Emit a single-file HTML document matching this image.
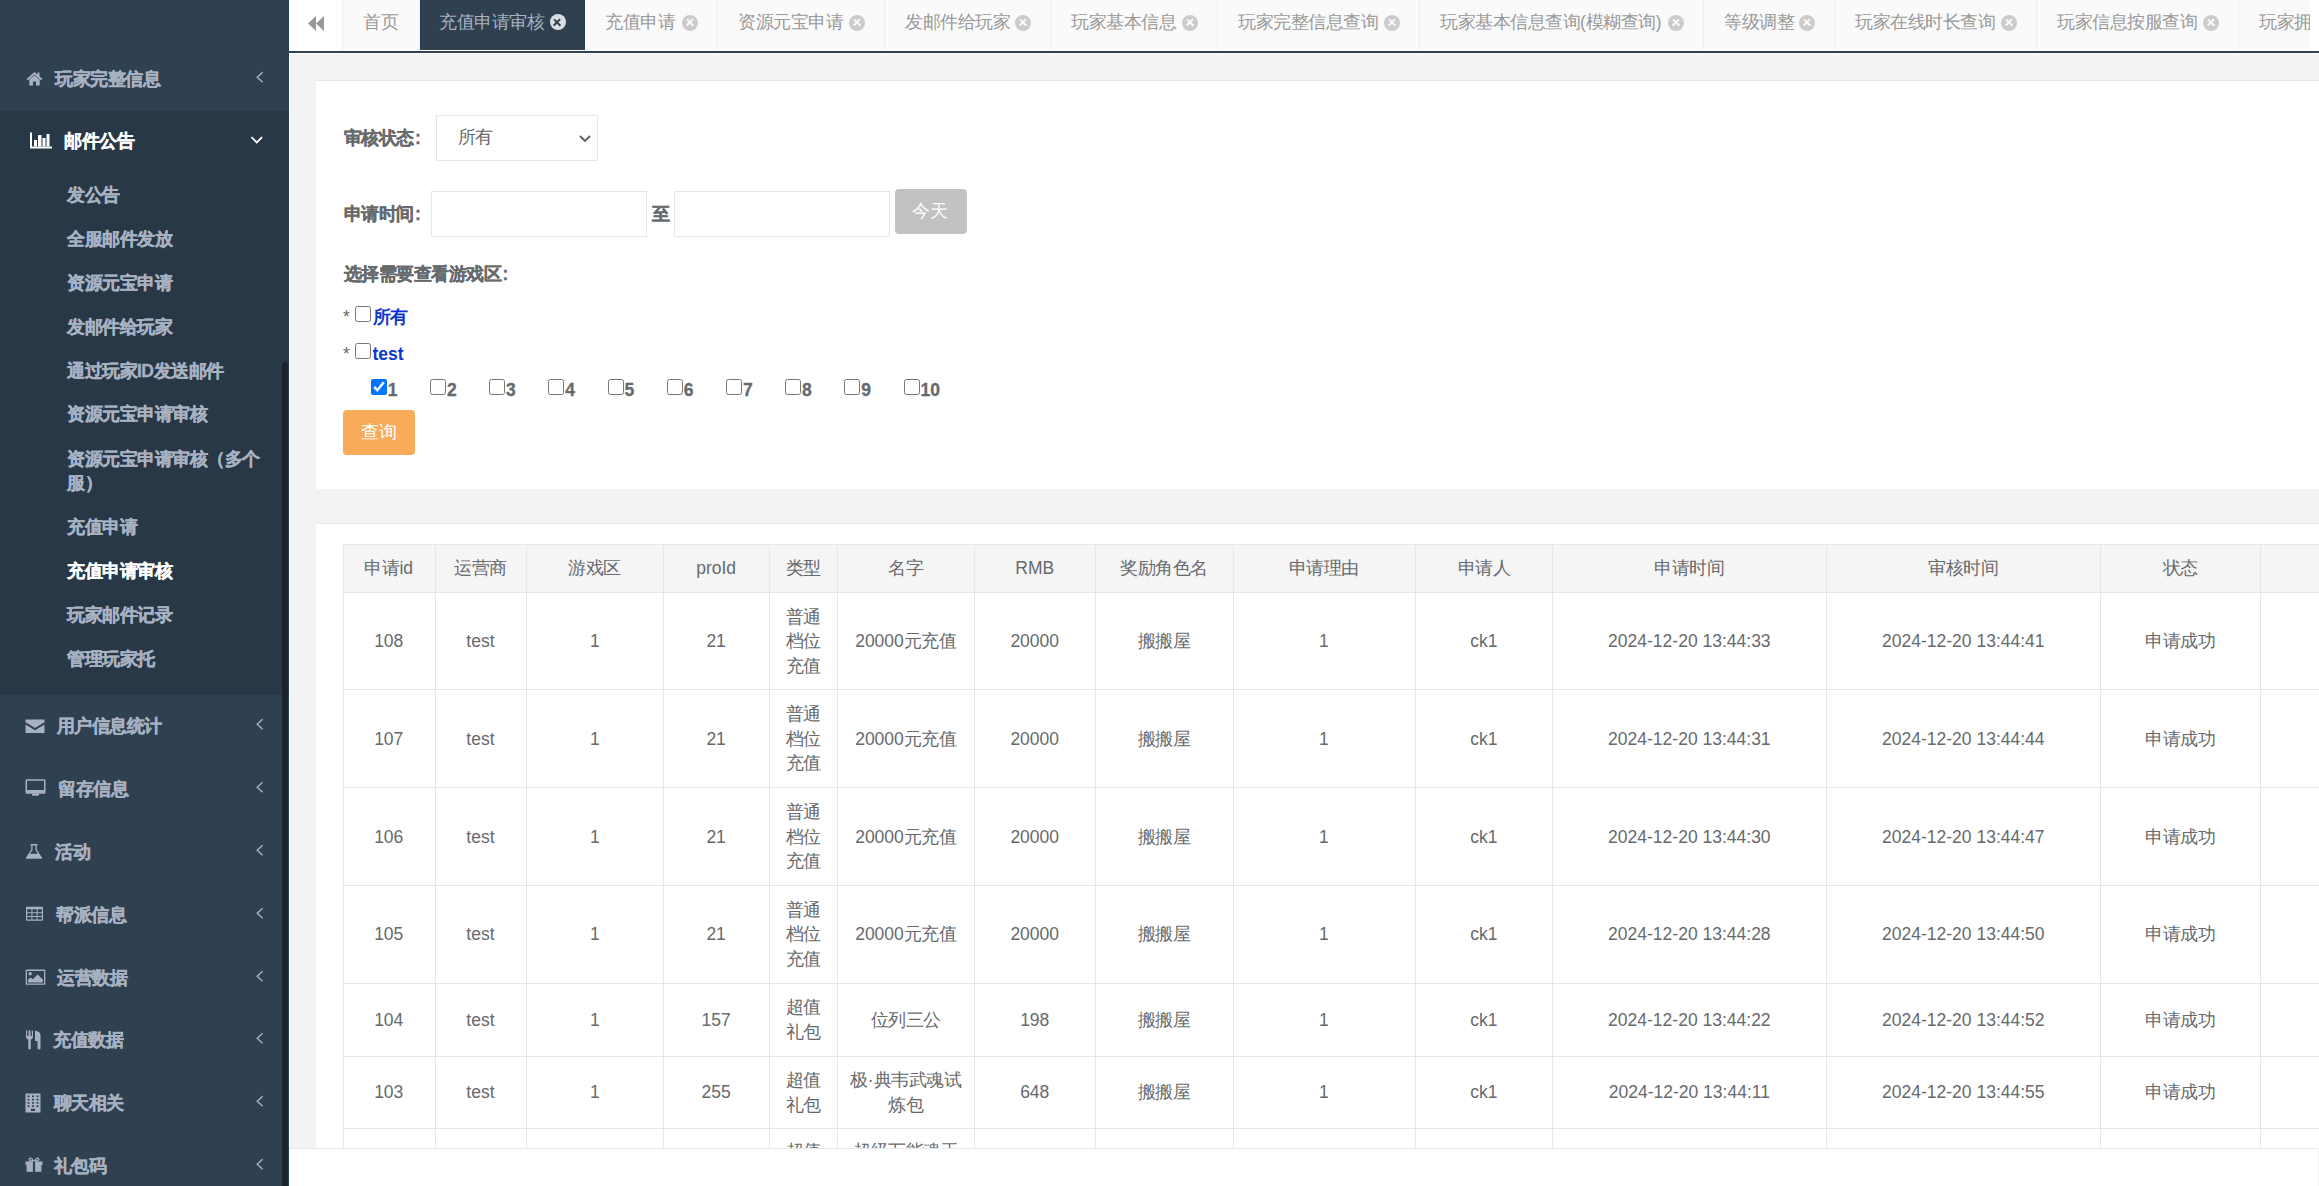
<!DOCTYPE html>
<html><head><meta charset="utf-8">
<style>
*{box-sizing:border-box}
html,body{margin:0;padding:0}
body{width:2319px;height:1186px;overflow:hidden;position:relative;background:#f3f3f4;font-family:"Liberation Sans",sans-serif;font-size:17.5px;color:#676a6c}
.abs{position:absolute}
.c{letter-spacing:-0.5px}
/* sidebar */
#side{position:absolute;left:0;top:0;width:289px;height:1186px;background:#2f4050;overflow:hidden}
#side .sub{position:absolute;left:0;top:111px;width:289px;height:584px;background:#293846}
.nv{position:absolute;left:0;width:289px;height:24px;line-height:24px;font-weight:bold;-webkit-text-stroke:0.35px currentColor;color:#a7b1c2;white-space:nowrap}
.nv .t{position:absolute;top:0}
.nv svg{position:absolute}
.chev{position:absolute;left:255px}
.sb{position:absolute;left:67px;font-weight:bold;-webkit-text-stroke:0.35px currentColor;color:#a7b1c2;line-height:24.5px;white-space:nowrap}
#thumb{position:absolute;left:282px;top:362px;width:6px;height:900px;background:#1b232d;border-radius:3px}
#wline{position:absolute;left:289px;top:0;width:1px;height:1186px;background:#fff}
/* tabs */
#tabs{position:absolute;left:290px;top:0;width:2029px;height:50px;background:#fff}
#tabline{position:absolute;left:290px;top:50px;width:2029px;height:4px;background:#fff}
#tabline div{position:absolute;left:-1px;top:1px;width:2030px;height:2px;background:#2f4050}
.tab{position:absolute;top:0;height:50px;background:#fafafa;border-right:1px solid #eee;line-height:45px;color:#999;white-space:nowrap;padding-left:20px}
.tab.act{background:#2f4050;color:#a7b1c2;border-right:none}
.xc{position:absolute;top:14.5px;width:16px;height:16px;border-radius:50%;background:#ccc}
.xc:before,.xc:after{content:"";position:absolute;left:6.8px;top:3.75px;width:2.4px;height:8.5px;background:#fafafa;transform:rotate(45deg)}
.xc:after{transform:rotate(-45deg)}
.act .xc{background:#d9dde3;top:14px}
.act .xc:before,.act .xc:after{background:#2f4050}
/* panels */
.panel{position:absolute;left:316px;width:2003px;background:#fff;border-top:1px solid #e7eaec}
.cb{margin:0;width:16px;height:16px}
.td{text-align:center;line-height:24.5px;color:#676a6c;white-space:nowrap}
#foot{position:absolute;left:289px;top:1148px;width:2029px;height:38px;background:#fff;border-top:1px solid #e7eaec}
</style></head><body>

<div id="side">
  <div class="sub"></div>
<div class="nv" style="top:67px;color:#a7b1c2"><span class="t c" style="left:55px">玩家完整信息</span></div><svg class="abs" style="left:26px;top:71px" width="17" height="15" viewBox="0 0 17 15"><path d="M8.5 1 L0.5 8 L2 9.3 L8.5 3.6 L15 9.3 L16.5 8 L13.5 5.4 V1.5 H11.5 V3.6 Z" fill="#a7b1c2"/><path d="M3.3 8.6 L8.5 4.2 L13.7 8.6 V14.5 H10 V10.5 H7 V14.5 H3.3 Z" fill="#a7b1c2"/></svg><svg class="abs" style="left:254px;top:71px" width="12" height="14" viewBox="0 0 12 14"><polyline points="8.6,1.2 3.2,6.2 8.6,11.2" fill="none" stroke="#a7b1c2" stroke-width="1.4"/></svg>
<div class="nv" style="top:129px;color:#fff"><span class="t c" style="left:64px">邮件公告</span></div><svg class="abs" style="left:30px;top:132px" width="23" height="17" viewBox="0 0 23 17"><path d="M1 0.5 V15.5 H22" fill="none" stroke="#fff" stroke-width="2"/><rect x="4" y="8" width="3" height="6.5" fill="#fff"/><rect x="8" y="3" width="3.5" height="11.5" fill="#fff"/><rect x="12.5" y="6" width="3" height="8.5" fill="#fff"/><rect x="16.5" y="2" width="3" height="12.5" fill="#fff"/></svg><svg class="abs" style="left:250px;top:133.5px" width="14" height="12" viewBox="0 0 14 12"><polyline points="1.5,3.2 6.8,8.5 12.1,3.2" fill="none" stroke="#fff" stroke-width="1.8"/></svg>
<div class="sb c" style="top:182.75px;color:#a7b1c2">发公告</div>
<div class="sb c" style="top:226.75px;color:#a7b1c2">全服邮件发放</div>
<div class="sb c" style="top:270.75px;color:#a7b1c2">资源元宝申请</div>
<div class="sb c" style="top:314.75px;color:#a7b1c2">发邮件给玩家</div>
<div class="sb c" style="top:358.75px;color:#a7b1c2">通过玩家ID发送邮件</div>
<div class="sb c" style="top:402.25px;color:#a7b1c2">资源元宝申请审核</div>
<div class="sb c" style="top:446.75px;color:#a7b1c2">资源元宝申请审核（多个<br>服）</div>
<div class="sb c" style="top:515.25px;color:#a7b1c2">充值申请</div>
<div class="sb c" style="top:559.25px;color:#fff">充值申请审核</div>
<div class="sb c" style="top:602.75px;color:#a7b1c2">玩家邮件记录</div>
<div class="sb c" style="top:646.75px;color:#a7b1c2">管理玩家托</div>
<div class="nv" style="top:714px;color:#a7b1c2"><span class="t c" style="left:56.5px">用户信息统计</span></div><svg class="abs" style="left:25px;top:719px" width="20" height="15" viewBox="0 0 20 15"><path d="M0.5 0.5 H19.5 V3.2 L10 9 L0.5 3.2 Z" fill="#a7b1c2"/><path d="M0.5 5.5 L10 11.2 L19.5 5.5 V14 H0.5 Z" fill="#a7b1c2"/></svg><svg class="abs" style="left:254px;top:718px" width="12" height="14" viewBox="0 0 12 14"><polyline points="8.6,1.2 3.2,6.2 8.6,11.2" fill="none" stroke="#a7b1c2" stroke-width="1.4"/></svg>
<div class="nv" style="top:777px;color:#a7b1c2"><span class="t c" style="left:58px">留存信息</span></div><svg class="abs" style="left:25px;top:779px" width="21" height="18" viewBox="0 0 21 18"><path fill-rule="evenodd" d="M1.8 0.3 H19.2 Q20.5 0.3 20.5 1.6 V13.5 Q20.5 14.8 19.2 14.8 H1.8 Q0.5 14.8 0.5 13.5 V1.6 Q0.5 0.3 1.8 0.3 Z M2 1.8 V10.9 H19 V1.8 Z" fill="#a7b1c2"/><path d="M7 14.5 H14 V16 Q14 16.8 13.2 16.8 H7.8 Q7 16.8 7 16 Z" fill="#a7b1c2"/></svg><svg class="abs" style="left:254px;top:781px" width="12" height="14" viewBox="0 0 12 14"><polyline points="8.6,1.2 3.2,6.2 8.6,11.2" fill="none" stroke="#a7b1c2" stroke-width="1.4"/></svg>
<div class="nv" style="top:840px;color:#a7b1c2"><span class="t c" style="left:55px">活动</span></div><svg class="abs" style="left:25px;top:843px" width="18" height="17" viewBox="0 0 18 17"><rect x="5.5" y="1" width="7" height="1.6" fill="#a7b1c2"/><path d="M6.9 2.5 V6.8 L1.3 15.3 M11.1 2.5 V6.8 L16.7 15.3" fill="none" stroke="#a7b1c2" stroke-width="1.3"/><path d="M4.3 10.8 H13.7 L16.9 15.8 H1.1 Z" fill="#a7b1c2"/></svg><svg class="abs" style="left:254px;top:844px" width="12" height="14" viewBox="0 0 12 14"><polyline points="8.6,1.2 3.2,6.2 8.6,11.2" fill="none" stroke="#a7b1c2" stroke-width="1.4"/></svg>
<div class="nv" style="top:903px;color:#a7b1c2"><span class="t c" style="left:56px">帮派信息</span></div><svg class="abs" style="left:25px;top:906px" width="19" height="16" viewBox="0 0 19 16"><path fill-rule="evenodd" d="M1.8 0.8 H17.2 Q18 0.8 18 1.6 V14 Q18 14.8 17.2 14.8 H1.8 Q1 14.8 1 14 V1.6 Q1 0.8 1.8 0.8 Z M2.2 3.3 V6.3 H6.4 V3.3 Z M7.4 3.3 V6.3 H11.6 V3.3 Z M12.6 3.3 V6.3 H16.8 V3.3 Z M2.2 7.3 V10 H6.4 V7.3 Z M7.4 7.3 V10 H11.6 V7.3 Z M12.6 7.3 V10 H16.8 V7.3 Z M2.2 11 V13.6 H6.4 V11 Z M7.4 11 V13.6 H11.6 V11 Z M12.6 11 V13.6 H16.8 V11 Z" fill="#a7b1c2"/></svg><svg class="abs" style="left:254px;top:907px" width="12" height="14" viewBox="0 0 12 14"><polyline points="8.6,1.2 3.2,6.2 8.6,11.2" fill="none" stroke="#a7b1c2" stroke-width="1.4"/></svg>
<div class="nv" style="top:965.5px;color:#a7b1c2"><span class="t c" style="left:57px">运营数据</span></div><svg class="abs" style="left:25px;top:969px" width="21" height="17" viewBox="0 0 21 17"><path fill-rule="evenodd" d="M1.5 0.6 H19.5 Q20.3 0.6 20.3 1.4 V15 Q20.3 15.8 19.5 15.8 H1.5 Q0.7 15.8 0.7 15 V1.4 Q0.7 0.6 1.5 0.6 Z M2 2 V14.4 H19 V2 Z" fill="#a7b1c2"/><circle cx="5.2" cy="4.8" r="1.7" fill="#a7b1c2"/><path d="M3 13.6 V10.8 L5.5 8.6 L7.8 10.2 L12.6 5.6 L17.8 10.4 V13.6 Z" fill="#a7b1c2"/></svg><svg class="abs" style="left:254px;top:969.5px" width="12" height="14" viewBox="0 0 12 14"><polyline points="8.6,1.2 3.2,6.2 8.6,11.2" fill="none" stroke="#a7b1c2" stroke-width="1.4"/></svg>
<div class="nv" style="top:1028px;color:#a7b1c2"><span class="t c" style="left:53px">充值数据</span></div><svg class="abs" style="left:25px;top:1030px" width="16" height="20" viewBox="0 0 16 20"><path d="M1 0.5 V6.5 Q1 9 3.3 9.5 V18.5 Q3.3 19.5 4.5 19.5 Q5.8 19.5 5.8 18.5 V9.5 Q8 9 8 6.5 V0.5 H6.8 V6 H5.5 V0.5 H3.5 V6 H2.2 V0.5 Z" fill="#a7b1c2"/><path d="M10 0.5 Q15.5 1.5 15.5 5 V18.5 Q15.5 19.5 14 19.5 Q12.5 19.5 12.5 18.5 V11 H10 Z" fill="#a7b1c2"/></svg><svg class="abs" style="left:254px;top:1032px" width="12" height="14" viewBox="0 0 12 14"><polyline points="8.6,1.2 3.2,6.2 8.6,11.2" fill="none" stroke="#a7b1c2" stroke-width="1.4"/></svg>
<div class="nv" style="top:1091px;color:#a7b1c2"><span class="t c" style="left:53.5px">聊天相关</span></div><svg class="abs" style="left:25px;top:1093px" width="16" height="20" viewBox="0 0 16 20"><rect x="0.5" y="0.5" width="15" height="19" fill="#a7b1c2"/><g fill="#2f4050"><rect x="2.5" y="2.5" width="2" height="1.6"/><rect x="7" y="2.5" width="2" height="1.6"/><rect x="11.5" y="2.5" width="2" height="1.6"/><rect x="2.5" y="5.8" width="2" height="1.6"/><rect x="7" y="5.8" width="2" height="1.6"/><rect x="11.5" y="5.8" width="2" height="1.6"/><rect x="2.5" y="9.1" width="2" height="1.6"/><rect x="7" y="9.1" width="2" height="1.6"/><rect x="11.5" y="9.1" width="2" height="1.6"/><rect x="2.5" y="12.4" width="2" height="1.6"/><rect x="7" y="12.4" width="2" height="1.6"/><rect x="11.5" y="12.4" width="2" height="1.6"/><rect x="6" y="15.8" width="4" height="2.2"/></g></svg><svg class="abs" style="left:254px;top:1095px" width="12" height="14" viewBox="0 0 12 14"><polyline points="8.6,1.2 3.2,6.2 8.6,11.2" fill="none" stroke="#a7b1c2" stroke-width="1.4"/></svg>
<div class="nv" style="top:1153.5px;color:#a7b1c2"><span class="t c" style="left:53.5px">礼包码</span></div><svg class="abs" style="left:25px;top:1157px" width="18" height="16" viewBox="0 0 18 16"><path d="M8.6 4.3 Q6.8 0.6 5.2 1.2 Q3.4 2 5 3.6 Z M9.4 4.3 Q11.2 0.6 12.8 1.2 Q14.6 2 13 3.6 Z" fill="none" stroke="#a7b1c2" stroke-width="1.4"/><rect x="0.5" y="4.4" width="17" height="3.6" fill="#a7b1c2"/><rect x="1.6" y="8" width="14.8" height="6.8" fill="#a7b1c2"/><rect x="7.9" y="4.4" width="2.2" height="10.4" fill="#2f4050"/></svg><svg class="abs" style="left:254px;top:1157.5px" width="12" height="14" viewBox="0 0 12 14"><polyline points="8.6,1.2 3.2,6.2 8.6,11.2" fill="none" stroke="#a7b1c2" stroke-width="1.4"/></svg>
<div id="thumb"></div>
</div>
<div id="wline"></div>

<div id="tabs"></div>
<div class="abs" style="left:342px;top:0;width:1px;height:50px;background:#eee"></div>
<svg class="abs" style="left:307px;top:15px" width="18" height="17" viewBox="0 0 18 17"><path d="M1 8.5 L9 1 V16 Z M9 8.5 L17 1 V16 Z" fill="#999"/></svg>
<div class="tab" style="left:343px;width:77px"><span class="c" style="position:absolute;left:20px">首页</span></div>
<div class="tab act" style="left:420px;width:165px"><span style="position:absolute;left:19px"><span class="c">充值申请审核</span></span><i class="xc" style="left:129.5px"></i></div>
<div class="tab" style="left:585px;width:133px"><span style="position:absolute;left:20px"><span class="c">充值申请</span></span><i class="xc" style="left:97px"></i></div>
<div class="tab" style="left:718px;width:167px"><span style="position:absolute;left:20px"><span class="c">资源元宝申请</span></span><i class="xc" style="left:131px"></i></div>
<div class="tab" style="left:885px;width:166px"><span style="position:absolute;left:20px"><span class="c">发邮件给玩家</span></span><i class="xc" style="left:130px"></i></div>
<div class="tab" style="left:1051px;width:167px"><span style="position:absolute;left:20px"><span class="c">玩家基本信息</span></span><i class="xc" style="left:131px"></i></div>
<div class="tab" style="left:1218px;width:202px"><span style="position:absolute;left:20px"><span class="c">玩家完整信息查询</span></span><i class="xc" style="left:166px"></i></div>
<div class="tab" style="left:1420px;width:284px"><span style="position:absolute;left:20px"><span class="c">玩家基本信息查询</span>(<span class="c">模糊查询</span>)</span><i class="xc" style="left:248px"></i></div>
<div class="tab" style="left:1704px;width:131px"><span style="position:absolute;left:20px"><span class="c">等级调整</span></span><i class="xc" style="left:95px"></i></div>
<div class="tab" style="left:1835px;width:202px"><span style="position:absolute;left:20px"><span class="c">玩家在线时长查询</span></span><i class="xc" style="left:166px"></i></div>
<div class="tab" style="left:2037px;width:202px"><span style="position:absolute;left:20px"><span class="c">玩家信息按服查询</span></span><i class="xc" style="left:166px"></i></div>
<div class="tab" style="left:2239px;width:71px;border-right:none;overflow:hidden"><span class="c" style="position:absolute;left:20px">玩家拥有</span></div>
<div id="tabline"><div></div></div>

<div class="panel" style="top:80px;height:409px"></div>
<div class="abs" style="left:343.5px;top:126px;line-height:24px;white-space:nowrap;font-weight:bold;-webkit-text-stroke:0.3px currentColor;color:#676a6c;"><span class="c">审核状态</span><span style="margin-left:1.5px">:</span></div>
<div class="abs" style="left:436px;top:115px;width:162px;height:46px;border:1px solid #e5e6e7;background:#fff"></div>
<div class="abs" style="left:457.5px;top:125px;line-height:24px;white-space:nowrap;color:#676a6c;"><span class="c">所有</span></div>
<svg class="abs" style="left:578px;top:133px" width="14" height="11" viewBox="0 0 14 11"><polyline points="2,3 7,8 12,3" fill="none" stroke="#595d61" stroke-width="1.8"/></svg>
<div class="abs" style="left:343.5px;top:202px;line-height:24px;white-space:nowrap;font-weight:bold;-webkit-text-stroke:0.3px currentColor;color:#676a6c;"><span class="c">申请时间</span><span style="margin-left:1.5px">:</span></div>
<div class="abs" style="left:431px;top:191px;width:216px;height:46px;border:1px solid #e5e6e7;background:#fff"></div>
<div class="abs" style="left:652px;top:201.5px;line-height:24px;white-space:nowrap;font-weight:bold;-webkit-text-stroke:0.3px currentColor;color:#676a6c;"><span class="c">至</span></div>
<div class="abs" style="left:674px;top:191px;width:216px;height:46px;border:1px solid #e5e6e7;background:#fff"></div>
<div class="abs" style="left:895px;top:189px;width:72px;height:45px;border-radius:4px;background:#c2c2c2"></div>
<div class="abs" style="left:912px;top:198.5px;line-height:24px;white-space:nowrap;color:#fff;"><span class="c">今天</span></div>
<div class="abs" style="left:343.5px;top:261.5px;line-height:24px;white-space:nowrap;font-weight:bold;-webkit-text-stroke:0.3px currentColor;color:#676a6c;"><span class="c">选择需要查看游戏区</span><span style="margin-left:1.5px">:</span></div>
<div class="abs" style="left:343px;top:305.0px;line-height:24px;white-space:nowrap;color:#676a6c;font-size:17.5px">*</div>
<input type="checkbox" class="abs cb" style="left:355px;top:306px">
<div class="abs" style="left:372.5px;top:305px;line-height:24px;white-space:nowrap;font-weight:bold;color:#0a36d0;"><span class="c">所有</span></div>
<div class="abs" style="left:343px;top:342.0px;line-height:24px;white-space:nowrap;color:#676a6c;font-size:17.5px">*</div>
<input type="checkbox" class="abs cb" style="left:355px;top:343px">
<div class="abs" style="left:372.5px;top:341.5px;line-height:24px;white-space:nowrap;font-weight:bold;color:#0a36d0;">test</div>
<input type="checkbox" class="abs cb" style="left:370.7px;top:379px" checked>
<div class="abs" style="left:387.7px;top:377.5px;line-height:24px;white-space:nowrap;font-weight:bold;-webkit-text-stroke:0.3px currentColor;color:#676a6c;">1</div>
<input type="checkbox" class="abs cb" style="left:429.9px;top:379px">
<div class="abs" style="left:446.9px;top:377.5px;line-height:24px;white-space:nowrap;font-weight:bold;-webkit-text-stroke:0.3px currentColor;color:#676a6c;">2</div>
<input type="checkbox" class="abs cb" style="left:489.1px;top:379px">
<div class="abs" style="left:506.1px;top:377.5px;line-height:24px;white-space:nowrap;font-weight:bold;-webkit-text-stroke:0.3px currentColor;color:#676a6c;">3</div>
<input type="checkbox" class="abs cb" style="left:548.3px;top:379px">
<div class="abs" style="left:565.3px;top:377.5px;line-height:24px;white-space:nowrap;font-weight:bold;-webkit-text-stroke:0.3px currentColor;color:#676a6c;">4</div>
<input type="checkbox" class="abs cb" style="left:607.5px;top:379px">
<div class="abs" style="left:624.5px;top:377.5px;line-height:24px;white-space:nowrap;font-weight:bold;-webkit-text-stroke:0.3px currentColor;color:#676a6c;">5</div>
<input type="checkbox" class="abs cb" style="left:666.7px;top:379px">
<div class="abs" style="left:683.7px;top:377.5px;line-height:24px;white-space:nowrap;font-weight:bold;-webkit-text-stroke:0.3px currentColor;color:#676a6c;">6</div>
<input type="checkbox" class="abs cb" style="left:725.9px;top:379px">
<div class="abs" style="left:742.9px;top:377.5px;line-height:24px;white-space:nowrap;font-weight:bold;-webkit-text-stroke:0.3px currentColor;color:#676a6c;">7</div>
<input type="checkbox" class="abs cb" style="left:785.1px;top:379px">
<div class="abs" style="left:802.1px;top:377.5px;line-height:24px;white-space:nowrap;font-weight:bold;-webkit-text-stroke:0.3px currentColor;color:#676a6c;">8</div>
<input type="checkbox" class="abs cb" style="left:844.3px;top:379px">
<div class="abs" style="left:861.3px;top:377.5px;line-height:24px;white-space:nowrap;font-weight:bold;-webkit-text-stroke:0.3px currentColor;color:#676a6c;">9</div>
<input type="checkbox" class="abs cb" style="left:903.5px;top:379px">
<div class="abs" style="left:920.5px;top:377.5px;line-height:24px;white-space:nowrap;font-weight:bold;-webkit-text-stroke:0.3px currentColor;color:#676a6c;">10</div>
<div class="abs" style="left:343px;top:410px;width:72px;height:45px;border-radius:4px;background:#f8ac59"></div>
<div class="abs" style="left:361px;top:420px;line-height:24px;white-space:nowrap;color:#fff;"><span class="c">查询</span></div>
<div class="panel" style="top:523px;height:625px;overflow:hidden"></div>
<div id="tbl" class="abs" style="left:0;top:0;width:2319px;height:1148px;overflow:hidden">
<div class="abs" style="left:343px;top:544.3px;width:1976px;height:48px;background:#f5f5f6"></div>
<div class="abs" style="left:343px;top:544.3px;width:1976px;height:1px;background:#e7e7e7"></div>
<div class="abs" style="left:343px;top:592.4px;width:1976px;height:1px;background:#e7e7e7"></div>
<div class="abs" style="left:343px;top:689.2px;width:1976px;height:1px;background:#e7e7e7"></div>
<div class="abs" style="left:343px;top:787.3px;width:1976px;height:1px;background:#e7e7e7"></div>
<div class="abs" style="left:343px;top:885.2px;width:1976px;height:1px;background:#e7e7e7"></div>
<div class="abs" style="left:343px;top:982.8px;width:1976px;height:1px;background:#e7e7e7"></div>
<div class="abs" style="left:343px;top:1055.7px;width:1976px;height:1px;background:#e7e7e7"></div>
<div class="abs" style="left:343px;top:1128.2px;width:1976px;height:1px;background:#e7e7e7"></div>
<div class="abs" style="left:343px;top:544.3px;width:1px;height:700px;background:#e7e7e7"></div>
<div class="abs" style="left:434.5px;top:544.3px;width:1px;height:700px;background:#e7e7e7"></div>
<div class="abs" style="left:526.3px;top:544.3px;width:1px;height:700px;background:#e7e7e7"></div>
<div class="abs" style="left:663.2px;top:544.3px;width:1px;height:700px;background:#e7e7e7"></div>
<div class="abs" style="left:769.1px;top:544.3px;width:1px;height:700px;background:#e7e7e7"></div>
<div class="abs" style="left:837.1px;top:544.3px;width:1px;height:700px;background:#e7e7e7"></div>
<div class="abs" style="left:974.4px;top:544.3px;width:1px;height:700px;background:#e7e7e7"></div>
<div class="abs" style="left:1095.1px;top:544.3px;width:1px;height:700px;background:#e7e7e7"></div>
<div class="abs" style="left:1232.5px;top:544.3px;width:1px;height:700px;background:#e7e7e7"></div>
<div class="abs" style="left:1415.3px;top:544.3px;width:1px;height:700px;background:#e7e7e7"></div>
<div class="abs" style="left:1552.3px;top:544.3px;width:1px;height:700px;background:#e7e7e7"></div>
<div class="abs" style="left:1826.4px;top:544.3px;width:1px;height:700px;background:#e7e7e7"></div>
<div class="abs" style="left:2100.2px;top:544.3px;width:1px;height:700px;background:#e7e7e7"></div>
<div class="abs" style="left:2260.4px;top:544.3px;width:1px;height:700px;background:#e7e7e7"></div>
<div class="abs td" style="left:343px;width:91.5px;top:555.6px"><span class="c">申请</span>id</div>
<div class="abs td" style="left:434.5px;width:91.79999999999995px;top:555.6px"><span class="c">运营商</span></div>
<div class="abs td" style="left:526.3px;width:136.9000000000001px;top:555.6px"><span class="c">游戏区</span></div>
<div class="abs td" style="left:663.2px;width:105.89999999999998px;top:555.6px">proId</div>
<div class="abs td" style="left:769.1px;width:68.0px;top:555.6px"><span class="c">类型</span></div>
<div class="abs td" style="left:837.1px;width:137.29999999999995px;top:555.6px"><span class="c">名字</span></div>
<div class="abs td" style="left:974.4px;width:120.69999999999993px;top:555.6px">RMB</div>
<div class="abs td" style="left:1095.1px;width:137.4000000000001px;top:555.6px"><span class="c">奖励角色名</span></div>
<div class="abs td" style="left:1232.5px;width:182.79999999999995px;top:555.6px"><span class="c">申请理由</span></div>
<div class="abs td" style="left:1415.3px;width:137.0px;top:555.6px"><span class="c">申请人</span></div>
<div class="abs td" style="left:1552.3px;width:274.10000000000014px;top:555.6px"><span class="c">申请时间</span></div>
<div class="abs td" style="left:1826.4px;width:273.7999999999997px;top:555.6px"><span class="c">审核时间</span></div>
<div class="abs td" style="left:2100.2px;width:160.20000000000027px;top:555.6px"><span class="c">状态</span></div>
<div class="abs td" style="left:343px;width:91.5px;top:629.0px">108</div>
<div class="abs td" style="left:434.5px;width:91.79999999999995px;top:629.0px">test</div>
<div class="abs td" style="left:526.3px;width:136.9000000000001px;top:629.0px">1</div>
<div class="abs td" style="left:663.2px;width:105.89999999999998px;top:629.0px">21</div>
<div class="abs td" style="left:769.1px;width:68.0px;top:604.5px"><span class="c">普通</span><br><span class="c">档位</span><br><span class="c">充值</span></div>
<div class="abs td" style="left:837.1px;width:137.29999999999995px;top:629.0px">20000<span class="c">元充值</span></div>
<div class="abs td" style="left:974.4px;width:120.69999999999993px;top:629.0px">20000</div>
<div class="abs td" style="left:1095.1px;width:137.4000000000001px;top:629.0px"><span class="c">搬搬屋</span></div>
<div class="abs td" style="left:1232.5px;width:182.79999999999995px;top:629.0px">1</div>
<div class="abs td" style="left:1415.3px;width:137.0px;top:629.0px">ck1</div>
<div class="abs td" style="left:1552.3px;width:274.10000000000014px;top:629.0px">2024-12-20 13:44:33</div>
<div class="abs td" style="left:1826.4px;width:273.7999999999997px;top:629.0px">2024-12-20 13:44:41</div>
<div class="abs td" style="left:2100.2px;width:160.20000000000027px;top:629.0px"><span class="c">申请成功</span></div>
<div class="abs td" style="left:343px;width:91.5px;top:726.5px">107</div>
<div class="abs td" style="left:434.5px;width:91.79999999999995px;top:726.5px">test</div>
<div class="abs td" style="left:526.3px;width:136.9000000000001px;top:726.5px">1</div>
<div class="abs td" style="left:663.2px;width:105.89999999999998px;top:726.5px">21</div>
<div class="abs td" style="left:769.1px;width:68.0px;top:702.0px"><span class="c">普通</span><br><span class="c">档位</span><br><span class="c">充值</span></div>
<div class="abs td" style="left:837.1px;width:137.29999999999995px;top:726.5px">20000<span class="c">元充值</span></div>
<div class="abs td" style="left:974.4px;width:120.69999999999993px;top:726.5px">20000</div>
<div class="abs td" style="left:1095.1px;width:137.4000000000001px;top:726.5px"><span class="c">搬搬屋</span></div>
<div class="abs td" style="left:1232.5px;width:182.79999999999995px;top:726.5px">1</div>
<div class="abs td" style="left:1415.3px;width:137.0px;top:726.5px">ck1</div>
<div class="abs td" style="left:1552.3px;width:274.10000000000014px;top:726.5px">2024-12-20 13:44:31</div>
<div class="abs td" style="left:1826.4px;width:273.7999999999997px;top:726.5px">2024-12-20 13:44:44</div>
<div class="abs td" style="left:2100.2px;width:160.20000000000027px;top:726.5px"><span class="c">申请成功</span></div>
<div class="abs td" style="left:343px;width:91.5px;top:824.5px">106</div>
<div class="abs td" style="left:434.5px;width:91.79999999999995px;top:824.5px">test</div>
<div class="abs td" style="left:526.3px;width:136.9000000000001px;top:824.5px">1</div>
<div class="abs td" style="left:663.2px;width:105.89999999999998px;top:824.5px">21</div>
<div class="abs td" style="left:769.1px;width:68.0px;top:800.0px"><span class="c">普通</span><br><span class="c">档位</span><br><span class="c">充值</span></div>
<div class="abs td" style="left:837.1px;width:137.29999999999995px;top:824.5px">20000<span class="c">元充值</span></div>
<div class="abs td" style="left:974.4px;width:120.69999999999993px;top:824.5px">20000</div>
<div class="abs td" style="left:1095.1px;width:137.4000000000001px;top:824.5px"><span class="c">搬搬屋</span></div>
<div class="abs td" style="left:1232.5px;width:182.79999999999995px;top:824.5px">1</div>
<div class="abs td" style="left:1415.3px;width:137.0px;top:824.5px">ck1</div>
<div class="abs td" style="left:1552.3px;width:274.10000000000014px;top:824.5px">2024-12-20 13:44:30</div>
<div class="abs td" style="left:1826.4px;width:273.7999999999997px;top:824.5px">2024-12-20 13:44:47</div>
<div class="abs td" style="left:2100.2px;width:160.20000000000027px;top:824.5px"><span class="c">申请成功</span></div>
<div class="abs td" style="left:343px;width:91.5px;top:922.2px">105</div>
<div class="abs td" style="left:434.5px;width:91.79999999999995px;top:922.2px">test</div>
<div class="abs td" style="left:526.3px;width:136.9000000000001px;top:922.2px">1</div>
<div class="abs td" style="left:663.2px;width:105.89999999999998px;top:922.2px">21</div>
<div class="abs td" style="left:769.1px;width:68.0px;top:897.8px"><span class="c">普通</span><br><span class="c">档位</span><br><span class="c">充值</span></div>
<div class="abs td" style="left:837.1px;width:137.29999999999995px;top:922.2px">20000<span class="c">元充值</span></div>
<div class="abs td" style="left:974.4px;width:120.69999999999993px;top:922.2px">20000</div>
<div class="abs td" style="left:1095.1px;width:137.4000000000001px;top:922.2px"><span class="c">搬搬屋</span></div>
<div class="abs td" style="left:1232.5px;width:182.79999999999995px;top:922.2px">1</div>
<div class="abs td" style="left:1415.3px;width:137.0px;top:922.2px">ck1</div>
<div class="abs td" style="left:1552.3px;width:274.10000000000014px;top:922.2px">2024-12-20 13:44:28</div>
<div class="abs td" style="left:1826.4px;width:273.7999999999997px;top:922.2px">2024-12-20 13:44:50</div>
<div class="abs td" style="left:2100.2px;width:160.20000000000027px;top:922.2px"><span class="c">申请成功</span></div>
<div class="abs td" style="left:343px;width:91.5px;top:1007.5px">104</div>
<div class="abs td" style="left:434.5px;width:91.79999999999995px;top:1007.5px">test</div>
<div class="abs td" style="left:526.3px;width:136.9000000000001px;top:1007.5px">1</div>
<div class="abs td" style="left:663.2px;width:105.89999999999998px;top:1007.5px">157</div>
<div class="abs td" style="left:769.1px;width:68.0px;top:995.2px"><span class="c">超值</span><br><span class="c">礼包</span></div>
<div class="abs td" style="left:837.1px;width:137.29999999999995px;top:1007.5px"><span class="c">位列三公</span></div>
<div class="abs td" style="left:974.4px;width:120.69999999999993px;top:1007.5px">198</div>
<div class="abs td" style="left:1095.1px;width:137.4000000000001px;top:1007.5px"><span class="c">搬搬屋</span></div>
<div class="abs td" style="left:1232.5px;width:182.79999999999995px;top:1007.5px">1</div>
<div class="abs td" style="left:1415.3px;width:137.0px;top:1007.5px">ck1</div>
<div class="abs td" style="left:1552.3px;width:274.10000000000014px;top:1007.5px">2024-12-20 13:44:22</div>
<div class="abs td" style="left:1826.4px;width:273.7999999999997px;top:1007.5px">2024-12-20 13:44:52</div>
<div class="abs td" style="left:2100.2px;width:160.20000000000027px;top:1007.5px"><span class="c">申请成功</span></div>
<div class="abs td" style="left:343px;width:91.5px;top:1080.2px">103</div>
<div class="abs td" style="left:434.5px;width:91.79999999999995px;top:1080.2px">test</div>
<div class="abs td" style="left:526.3px;width:136.9000000000001px;top:1080.2px">1</div>
<div class="abs td" style="left:663.2px;width:105.89999999999998px;top:1080.2px">255</div>
<div class="abs td" style="left:769.1px;width:68.0px;top:1068.0px"><span class="c">超值</span><br><span class="c">礼包</span></div>
<div class="abs td" style="left:837.1px;width:137.29999999999995px;top:1068.0px"><span class="c">极</span>·<span class="c">典韦武魂试</span><br><span class="c">炼包</span></div>
<div class="abs td" style="left:974.4px;width:120.69999999999993px;top:1080.2px">648</div>
<div class="abs td" style="left:1095.1px;width:137.4000000000001px;top:1080.2px"><span class="c">搬搬屋</span></div>
<div class="abs td" style="left:1232.5px;width:182.79999999999995px;top:1080.2px">1</div>
<div class="abs td" style="left:1415.3px;width:137.0px;top:1080.2px">ck1</div>
<div class="abs td" style="left:1552.3px;width:274.10000000000014px;top:1080.2px">2024-12-20 13:44:11</div>
<div class="abs td" style="left:1826.4px;width:273.7999999999997px;top:1080.2px">2024-12-20 13:44:55</div>
<div class="abs td" style="left:2100.2px;width:160.20000000000027px;top:1080.2px"><span class="c">申请成功</span></div>
<div class="abs td" style="left:769.1px;width:68px;top:1138.5px"><span class="c">超值</span><br><span class="c">礼包</span></div>
<div class="abs td" style="left:837.1px;width:137.3px;top:1138.5px"><span class="c">超级万能魂玉</span><br><span class="c">礼包</span></div>
</div>

<div id="foot"></div>
</body></html>
